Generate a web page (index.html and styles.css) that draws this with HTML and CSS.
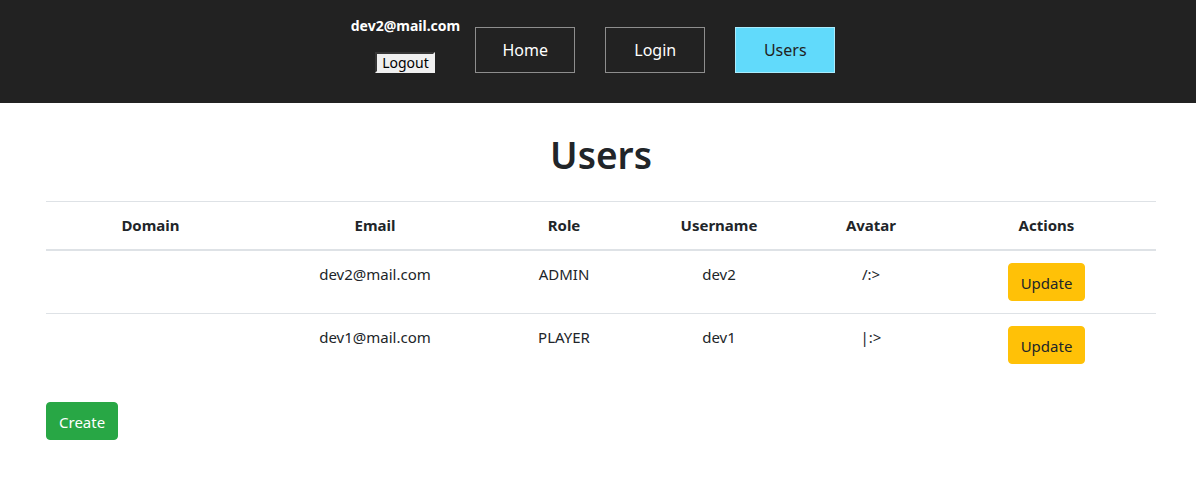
FILE: index.html
```html
<!DOCTYPE html>
<html>
<head>
<meta charset="utf-8">
<link rel="stylesheet" href="styles.css">
</head>
<body>
<header class="topbar">
  <nav class="nav">
    <div class="user">
      <div class="user-email">dev2@mail.com</div>
      <button class="logout">Logout</button>
    </div>
    <a class="nav-link">Home</a>
    <a class="nav-link">Login</a>
    <a class="nav-link active">Users</a>
  </nav>
</header>
<main class="container">
  <h1 class="title">Users</h1>
  <table class="table">
    <thead>
      <tr>
        <th class="c-domain">Domain</th>
        <th class="c-email">Email</th>
        <th class="c-role">Role</th>
        <th class="c-user">Username</th>
        <th class="c-avatar">Avatar</th>
        <th class="c-actions">Actions</th>
      </tr>
    </thead>
    <tbody>
      <tr>
        <td></td>
        <td>dev2@mail.com</td>
        <td>ADMIN</td>
        <td>dev2</td>
        <td>/:&gt;</td>
        <td><button class="btn btn-warning">Update</button></td>
      </tr>
      <tr>
        <td></td>
        <td>dev1@mail.com</td>
        <td>PLAYER</td>
        <td>dev1</td>
        <td>|:&gt;</td>
        <td><button class="btn btn-warning">Update</button></td>
      </tr>
    </tbody>
  </table>
  <button class="btn btn-success">Create</button>
</main>
</body>
</html>
```

FILE: styles.css
```css
* { box-sizing: border-box; }
body {
  margin: 0;
  font-family: "Noto Sans", "Open Sans", sans-serif;
  font-size: 16px;
  line-height: 1.5;
  color: #212529;
  background: #fff;
}
.topbar {
  background: #222222;
  height: 103px;
  padding-top: 14px;
}
.nav {
  display: flex;
  justify-content: center;
  align-items: flex-end;
}
.user {
  margin-left: 5px;
  display: flex;
  flex-direction: column;
  align-items: center;
}
.user-email {
  color: #fff;
  font-weight: bold;
  font-size: 14px;
  line-height: 24px;
}
.logout {
  margin-top: 14px;
  width: 60px;
  height: 21px;
  padding: 0;
  font-family: "Noto Sans", sans-serif;
  font-size: 14px;
  line-height: 17px;
  color: #000;
  background: #f0f0f0;
  border: 2px inset #8a8a8a;
  border-right-color: #f0f0f0;
  border-bottom-color: #f0f0f0;
}
.nav-link {
  margin: 0 15px;
  width: 100px;
  height: 46px;
  display: flex;
  align-items: center;
  justify-content: center;
  color: #fff;
  border: 1px solid #8e8e8e;
  font-size: 16px;
}
.nav-link.active {
  background: #61dafb;
  border-color: #a9ecfd;
  color: #222;
}
.container {
  width: 1110px;
  margin-left: 46px;
  padding-top: 28px;
}
.title {
  margin: 0 0 22px;
  text-align: center;
  font-size: 37px;
  font-weight: 600;
  line-height: 48px;
}
.table {
  width: 100%;
  border-collapse: collapse;
  margin-bottom: 26px;
}
.table th, .table td {
  padding: 12px;
  text-align: center;
  vertical-align: top;
  border-top: 1px solid #dee2e6;
}
.table th {
  font-weight: bold;
  font-size: 15px;
  border-bottom: 2px solid #dee2e6;
}
.table td { font-size: 15px; }
.c-domain { width: 209px; }
.c-email { width: 240px; }
.c-role { width: 138px; }
.c-user { width: 172px; }
.c-avatar { width: 132px; }
.c-actions { width: 219px; }
.btn {
  height: 38px;
  padding: 0 12px;
  font-family: inherit;
  font-size: 15px;
  line-height: 38px;
  border: 1px solid transparent;
  border-radius: 4px;
}
.btn-warning {
  background: #ffc107;
  border-color: #ffc107;
  color: #212529;
}
.btn-success {
  background: #28a745;
  border-color: #28a745;
  color: #fff;
}
```
